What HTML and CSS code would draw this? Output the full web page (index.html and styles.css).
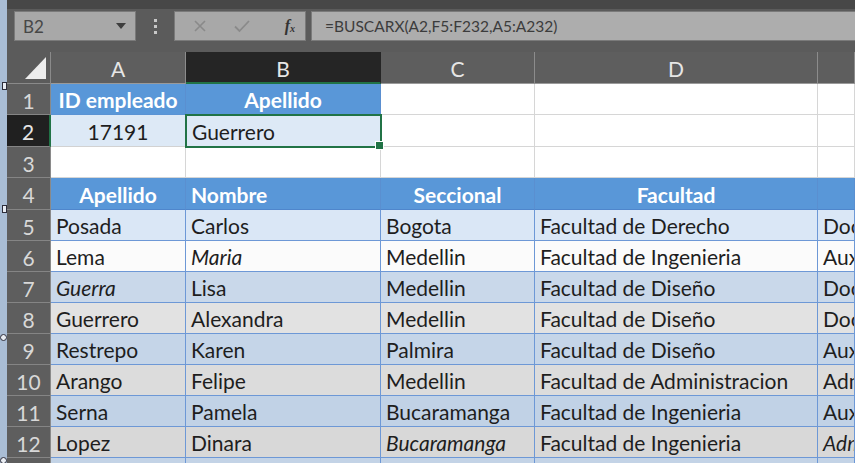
FILE: index.html
```html
<!DOCTYPE html>
<html lang="es">
<head>
<meta charset="utf-8">
<title>BUSCARX</title>
<link rel="stylesheet" href="styles.css">
</head>
<body>
<div class="app">
  <div class="edge"></div>
  <span class="handle sq h1"></span>
  <span class="handle sq h2"></span>
  <span class="handle rd h3"></span>
  <span class="handle rd h4"></span>
  <div class="main">
    <div class="fbar">
      <div class="namebox"><span class="ref">B2</span><span class="caret"></span></div>
      <div class="dots"><i></i><i></i><i></i></div>
      <div class="btns">
        <svg class="ico" width="16" height="16" viewBox="0 0 16 16"><path d="M3 3 L13 13 M13 3 L3 13" stroke="#8a8a8a" stroke-width="1.6" fill="none"/></svg>
        <svg class="ico" width="18" height="16" viewBox="0 0 18 16"><path d="M2 8.5 L6.5 13 L16 3" stroke="#8a8a8a" stroke-width="1.8" fill="none"/></svg>
        <span class="fx">f<sub>x</sub></span>
      </div>
      <div class="formula">=BUSCARX(A2,F5:F232,A5:A232)</div>
    </div>
    <div class="sheet">
      <div class="row colhead">
        <div class="corner"><span class="tri"></span></div>
        <div class="ch">A</div>
        <div class="ch sel">B</div>
        <div class="ch">C</div>
        <div class="ch">D</div>
        <div class="ch"></div>
      </div>
      <div class="row r1">
        <div class="rh">1</div>
        <div class="c th center">ID empleado</div>
        <div class="c th center">Apellido</div>
        <div class="c g"></div><div class="c g"></div><div class="c g"></div>
      </div>
      <div class="row r2 tall">
        <div class="rh act">2</div>
        <div class="c lb center">17191</div>
        <div class="c lb cur">Guerrero</div>
        <div class="c g"></div><div class="c g"></div><div class="c g"></div>
      </div>
      <div class="row r3">
        <div class="rh">3</div>
        <div class="c g"></div><div class="c g"></div><div class="c g"></div><div class="c g"></div><div class="c g"></div>
      </div>
      <div class="row r4 tall hdr">
        <div class="rh">4</div>
        <div class="c th center">Apellido</div>
        <div class="c th">Nombre</div>
        <div class="c th center">Seccional</div>
        <div class="c th center">Facultad</div>
        <div class="c th"></div>
      </div>
      <div class="row d b5">
        <div class="rh">5</div>
        <div class="c">Posada</div><div class="c">Carlos</div><div class="c">Bogota</div><div class="c">Facultad de Derecho</div><div class="c">Docente</div>
      </div>
      <div class="row d b6">
        <div class="rh">6</div>
        <div class="c">Lema</div><div class="c it">Maria</div><div class="c">Medellin</div><div class="c">Facultad de Ingenieria</div><div class="c">Auxiliar</div>
      </div>
      <div class="row d b7">
        <div class="rh">7</div>
        <div class="c it">Guerra</div><div class="c">Lisa</div><div class="c">Medellin</div><div class="c">Facultad de Diseño</div><div class="c">Docente</div>
      </div>
      <div class="row d b8">
        <div class="rh">8</div>
        <div class="c">Guerrero</div><div class="c">Alexandra</div><div class="c">Medellin</div><div class="c">Facultad de Diseño</div><div class="c">Docente</div>
      </div>
      <div class="row d b9">
        <div class="rh">9</div>
        <div class="c">Restrepo</div><div class="c">Karen</div><div class="c">Palmira</div><div class="c">Facultad de Diseño</div><div class="c">Auxiliar</div>
      </div>
      <div class="row d b10">
        <div class="rh">10</div>
        <div class="c">Arango</div><div class="c">Felipe</div><div class="c">Medellin</div><div class="c">Facultad de Administracion</div><div class="c">Administrativo</div>
      </div>
      <div class="row d b11">
        <div class="rh">11</div>
        <div class="c">Serna</div><div class="c">Pamela</div><div class="c">Bucaramanga</div><div class="c">Facultad de Ingenieria</div><div class="c">Auxiliar</div>
      </div>
      <div class="row d b12">
        <div class="rh">12</div>
        <div class="c">Lopez</div><div class="c">Dinara</div><div class="c it">Bucaramanga</div><div class="c">Facultad de Ingenieria</div><div class="c it">Administrativo</div>
      </div>
      <div class="row d b13">
        <div class="rh">13</div>
        <div class="c"></div><div class="c"></div><div class="c"></div><div class="c"></div><div class="c"></div>
      </div>
    </div>
  </div>
</div>
</body>
</html>
```
FILE: styles.css
```css
* { box-sizing: border-box; }
html, body { margin: 0; padding: 0; }
body {
  width: 855px;
  height: 463px;
  overflow: hidden;
  background: #5b5b5b;
  font-family: Lato, "Open Sans", sans-serif;
}
.app {
  position: relative;
  display: flex;
  width: 855px;
  height: 463px;
  overflow: hidden;
}
.edge {
  flex: 0 0 7px;
  background: #a9bdd5;
}
.handle {
  position: absolute;
  z-index: 5;
  border: 1px solid #2d2d3a;
  background: #e9edf3;
}
.handle.sq { width: 5px; height: 8px; left: 2px; }
.handle.rd { width: 7px; height: 7px; border-radius: 50%; left: 0; }
.h1 { top: 82px; }
.h2 { top: 205px; }
.h3 { top: 334px; }
.h4 { top: 457px; }

.main {
  flex: 1;
  display: flex;
  flex-direction: column;
  min-width: 0;
}

/* formula bar */
.fbar {
  height: 52px;
  flex: 0 0 52px;
  border-top: 9px solid #474747;
  padding-top: 2px;
  display: flex;
  align-items: flex-start;
  background: #5b5b5b;
}
.namebox {
  margin-left: 7px;
  width: 122px;
  height: 30px;
  background: #a8a8a8;
  border: 1px solid #7a7a7a;
  display: flex;
  align-items: center;
  justify-content: space-between;
  padding: 0 9px 0 8px;
  color: #474747;
  font-size: 17px;
}
.caret {
  width: 0; height: 0;
  border-left: 5px solid transparent;
  border-right: 5px solid transparent;
  border-top: 6px solid #3e3e3e;
}
.dots {
  width: 38px;
  height: 30px;
  display: flex;
  flex-direction: column;
  align-items: center;
  justify-content: center;
  gap: 3px;
}
.dots i {
  display: block;
  width: 3px; height: 3px;
  background: #c8c8c8;
}
.btns {
  width: 132px;
  height: 30px;
  background: #a8a8a8;
  border: 1px solid #7a7a7a;
  display: flex;
  align-items: center;
  padding: 0 10px 0 17px;
  gap: 0;
}
.btns .ico:first-child { margin-right: 25px; }
.btns .fx {
  margin-left: auto;
  font-family: "Liberation Serif", serif;
  font-style: italic;
  font-weight: bold;
  font-size: 16px;
  color: #333;
}
.btns .fx sub { font-size: 10px; vertical-align: -1px; }
.formula {
  margin-left: 5px;
  flex: 1;
  height: 30px;
  background: #adadad;
  border: 1px solid #7a7a7a;
  border-right: none;
  display: flex;
  align-items: center;
  padding-left: 13px;
  color: #3c3c3c;
  font-size: 15.5px;
  white-space: nowrap;
}

/* sheet */
.sheet {
  display: flex;
  flex-direction: column;
}
.row {
  display: grid;
  grid-template-columns: 44px 135px 195px 154px 283px 1fr;
  height: 31px;
  flex: 0 0 auto;
}
.row.tall { height: 32px; }
.row.colhead { height: 32px; }

.corner {
  position: relative;
  background: #5b5b5b;
  border-right: 1px solid #8a8a8a;
  border-bottom: 1px solid #8a8a8a;
}
.tri {
  position: absolute;
  right: 4px;
  bottom: 4px;
  width: 0; height: 0;
  border-left: 21px solid transparent;
  border-bottom: 22px solid #ececec;
}
.ch {
  display: flex;
  align-items: center;
  justify-content: center;
  padding-top: 2px;
  color: #e6e6e6;
  font-size: 21px;
  background: #5e5e5e;
  border-right: 1px solid #8c8c8c;
  border-bottom: 1px solid #9a9a9a;
}
.ch.sel {
  background: #252525;
  border-bottom: 2px solid #217346;
  border-right-color: #252525;
}

.rh {
  display: flex;
  align-items: center;
  justify-content: center;
  padding-top: 2px;
  background: #5e5e5e;
  color: #d8d8d8;
  font-size: 21px;
  border-right: 1px solid #8a8a8a;
  border-bottom: 1px solid #858585;
}
.rh.act {
  background: #202020;
  color: #e6e6e6;
  border-right: 2px solid #217346;
}

.c {
  display: flex;
  align-items: flex-end;
  padding: 0 5px 2px 5px;
  font-size: 21px;
  color: #1e1e1e;
  white-space: nowrap;
  overflow: hidden;
  border-right: 1px solid #6d98d6;
  border-bottom: 1px solid #6d98d6;
}
.c.center { justify-content: center; }
.c.it { font-style: italic; }
.c.g {
  background: #ffffff;
  border-right-color: #d6d6d6;
  border-bottom-color: #d6d6d6;
}
.c.th {
  background: #5997d8;
  color: #ffffff;
  font-weight: bold;
  border-right-color: #5a8fd0;
  border-bottom-color: #4f86cc;
}
.r1 .c.th { border-bottom-color: #5a93d4; }
.c.lb {
  background: #dde9f6;
  border-right-color: #c9d6e6;
  border-bottom-color: #d2d2d2;
}
.c.cur {
  position: relative;
  padding-left: 6px;
  outline: 2px solid #217346;
  outline-offset: -1px;
  overflow: visible;
}
.c.cur::after {
  content: "";
  position: absolute;
  right: -4px;
  bottom: -4px;
  width: 7px;
  height: 7px;
  background: #217346;
  border: 1px solid #ffffff;
  z-index: 3;
}

.b5  { background: #dae7f6; }
.b6  { background: #fbfbfb; }
.b7  { background: #c9d8ea; }
.b8  { background: #e2e2e2; }
.b9  { background: #c5d5e8; }
.b10 { background: #dcdcdc; }
.b11 { background: #c1d2e6; }
.b12 { background: #d8d8d8; }
.b13 { background: #c3d3e6; }
```
